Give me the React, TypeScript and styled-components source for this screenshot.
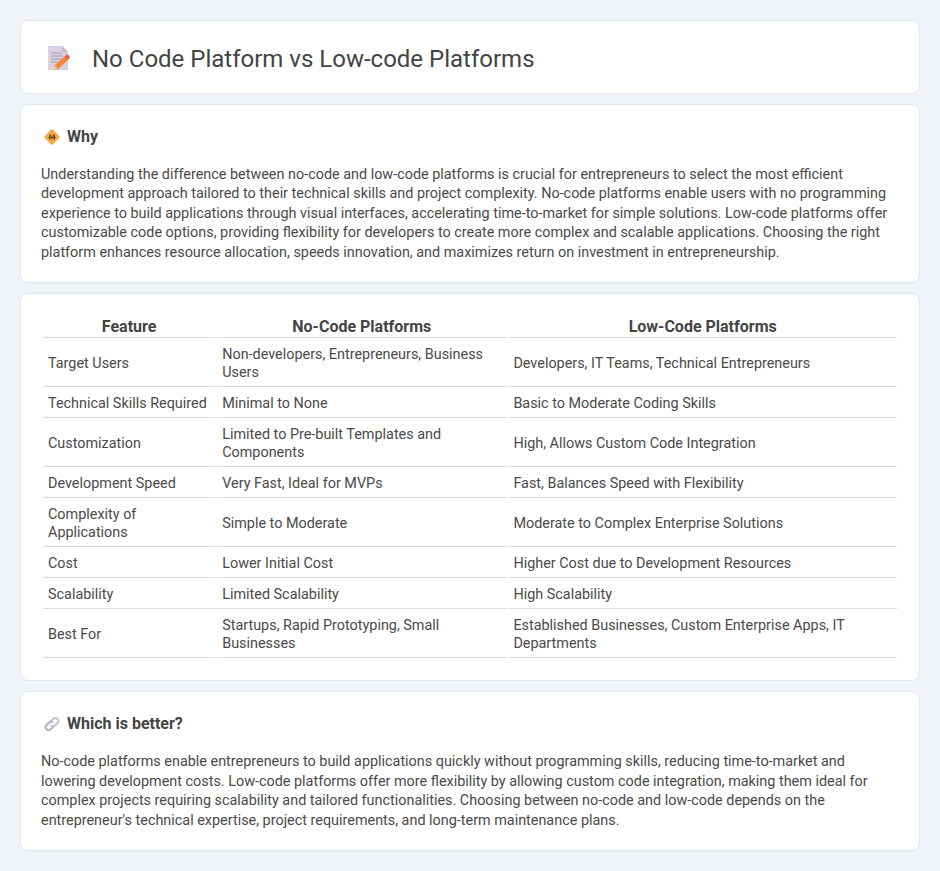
import styled, { createGlobalStyle } from 'styled-components';

const GlobalStyle = createGlobalStyle`
  body {
    margin: 0;
    background: #f0f4f8;
    font-family: Roboto, "Liberation Sans", sans-serif;
    color: #333;
  }
`;

const Page = styled.div`
  padding: 20px;
  display: flex;
  flex-direction: column;
  gap: 10px;
`;

const Card = styled.section`
  background: #fff;
  border: 1px solid #e2e8f0;
  border-radius: 8px;
  padding: 20px;
`;

const HeaderCard = styled(Card)`
  display: flex;
  align-items: center;
  gap: 19px;
  padding: 18px 20px;
`;

const Title = styled.h1`
  margin: 0;
  padding-top: 4px;
  font-size: 24px;
  line-height: 32px;
  font-weight: 400;
  color: #444;
`;

const SectionHead = styled.div`
  display: flex;
  align-items: center;
  gap: 6px;
  padding-left: 2px;
  margin-bottom: 16px;
`;

const SectionTitle = styled.h2`
  margin: 0;
  font-size: 16px;
  line-height: 24px;
  font-weight: 700;
  color: #444;
`;

const Body = styled.p`
  margin: 0;
  font-size: 14.4px;
  line-height: 1.35;
  color: #4a4a4a;
`;

const Table = styled.table`
  width: 100%;
  font-size: 14.4px;
  color: #4a4a4a;
`;

const Th = styled.th`
  font-size: 16px;
  font-weight: 700;
  color: #444;
  padding: 0 5px;
  line-height: 21px;
  border-bottom: 1px solid #ddd;
  text-align: center;
`;

const Td = styled.td`
  padding: 6px 5px 4px;
  line-height: 18px;
  border-bottom: 1px solid #ddd;
`;

const rows = [
  ['Target Users', 'Non-developers, Entrepreneurs, Business Users', 'Developers, IT Teams, Technical Entrepreneurs'],
  ['Technical Skills Required', 'Minimal to None', 'Basic to Moderate Coding Skills'],
  ['Customization', 'Limited to Pre-built Templates and Components', 'High, Allows Custom Code Integration'],
  ['Development Speed', 'Very Fast, Ideal for MVPs', 'Fast, Balances Speed with Flexibility'],
  ['Complexity of Applications', 'Simple to Moderate', 'Moderate to Complex Enterprise Solutions'],
  ['Cost', 'Lower Initial Cost', 'Higher Cost due to Development Resources'],
  ['Scalability', 'Limited Scalability', 'High Scalability'],
  ['Best For', 'Startups, Rapid Prototyping, Small Businesses', 'Established Businesses, Custom Enterprise Apps, IT Departments'],
];

const MemoIcon = () => (
  <svg width="32" height="32" viewBox="0 0 32 32">
    <path d="M7 5h14l6 6v18H7z" fill="#d9d0e3" />
    <path d="M21 5l6 6h-6z" fill="#c3b8d0" />
    <path d="M10 12h11M10 15h12M10 18h10M10 21h6" stroke="#a39ab0" strokeWidth="1.1" />
    <path d="M12 29l1.5-4.5 10-9 3.5 3.5-10 9z" fill="#f58534" />
    <path d="M23.5 15.500l1.500-1.500a1.600 1.600 0 0 1 2.300 0l1 1a1.600 1.600 0 0 1 0 2.300l-1.300 1.700z" fill="#f15a4f" />
    <path d="M12 29l1.500-4.500 3 3z" fill="#f3d3a8" />
  </svg>
);

const DiamondIcon = () => (
  <svg width="18" height="18" viewBox="0 0 18 18">
    <rect x="3.200" y="3.200" width="11.600" height="11.600" rx="1.500" transform="rotate(45 9 9)" fill="#f9a83e" />
    <path d="M6.800 6.500v5M8 6.500v5M10.300 6.500v5M11.500 6.500v5M5.500 9.500h7" stroke="#5c4a30" strokeWidth="1" fill="none" />
  </svg>
);

const LinkIcon = () => (
  <svg width="18" height="18" viewBox="0 0 18 18" fill="none">
    <path d="M7.500 6.500l3-3a3 3 0 0 1 4.200 4.200L12 10.400a3 3 0 0 1-4.200 0" stroke="#cfc5db" strokeWidth="2.200" />
    <path d="M10.500 11.500l-3 3a3 3 0 0 1-4.200-4.200L6 7.600a3 3 0 0 1 4.200 0" stroke="#bdb1cc" strokeWidth="2.200" />
  </svg>
);

export default function App() {
  return (
    <>
      <GlobalStyle />
      <Page>
        <HeaderCard>
          <MemoIcon />
          <Title>No Code Platform vs Low-code Platforms</Title>
        </HeaderCard>

        <Card>
          <SectionHead>
            <DiamondIcon />
            <SectionTitle>Why</SectionTitle>
          </SectionHead>
          <Body>
            Understanding the difference between no-code and low-code platforms is crucial for entrepreneurs to select the most efficient development approach tailored to their technical skills and project complexity. No-code platforms enable users with no programming experience to build applications through visual interfaces, accelerating time-to-market for simple solutions. Low-code platforms offer customizable code options, providing flexibility for developers to create more complex and scalable applications. Choosing the right platform enhances resource allocation, speeds innovation, and maximizes return on investment in entrepreneurship.
          </Body>
        </Card>

        <Card>
          <Table>
            <thead>
              <tr>
                <Th>Feature</Th>
                <Th>No-Code Platforms</Th>
                <Th>Low-Code Platforms</Th>
              </tr>
            </thead>
            <tbody>
              {rows.map((r) => (
                <tr key={r[0]}>
                  {r.map((c) => (
                    <Td key={c}>{c}</Td>
                  ))}
                </tr>
              ))}
            </tbody>
          </Table>
        </Card>

        <Card>
          <SectionHead>
            <LinkIcon />
            <SectionTitle>Which is better?</SectionTitle>
          </SectionHead>
          <Body>
            No-code platforms enable entrepreneurs to build applications quickly without programming skills, reducing time-to-market and lowering development costs. Low-code platforms offer more flexibility by allowing custom code integration, making them ideal for complex projects requiring scalability and tailored functionalities. Choosing between no-code and low-code depends on the entrepreneur's technical expertise, project requirements, and long-term maintenance plans.
          </Body>
        </Card>
      </Page>
    </>
  );
}
